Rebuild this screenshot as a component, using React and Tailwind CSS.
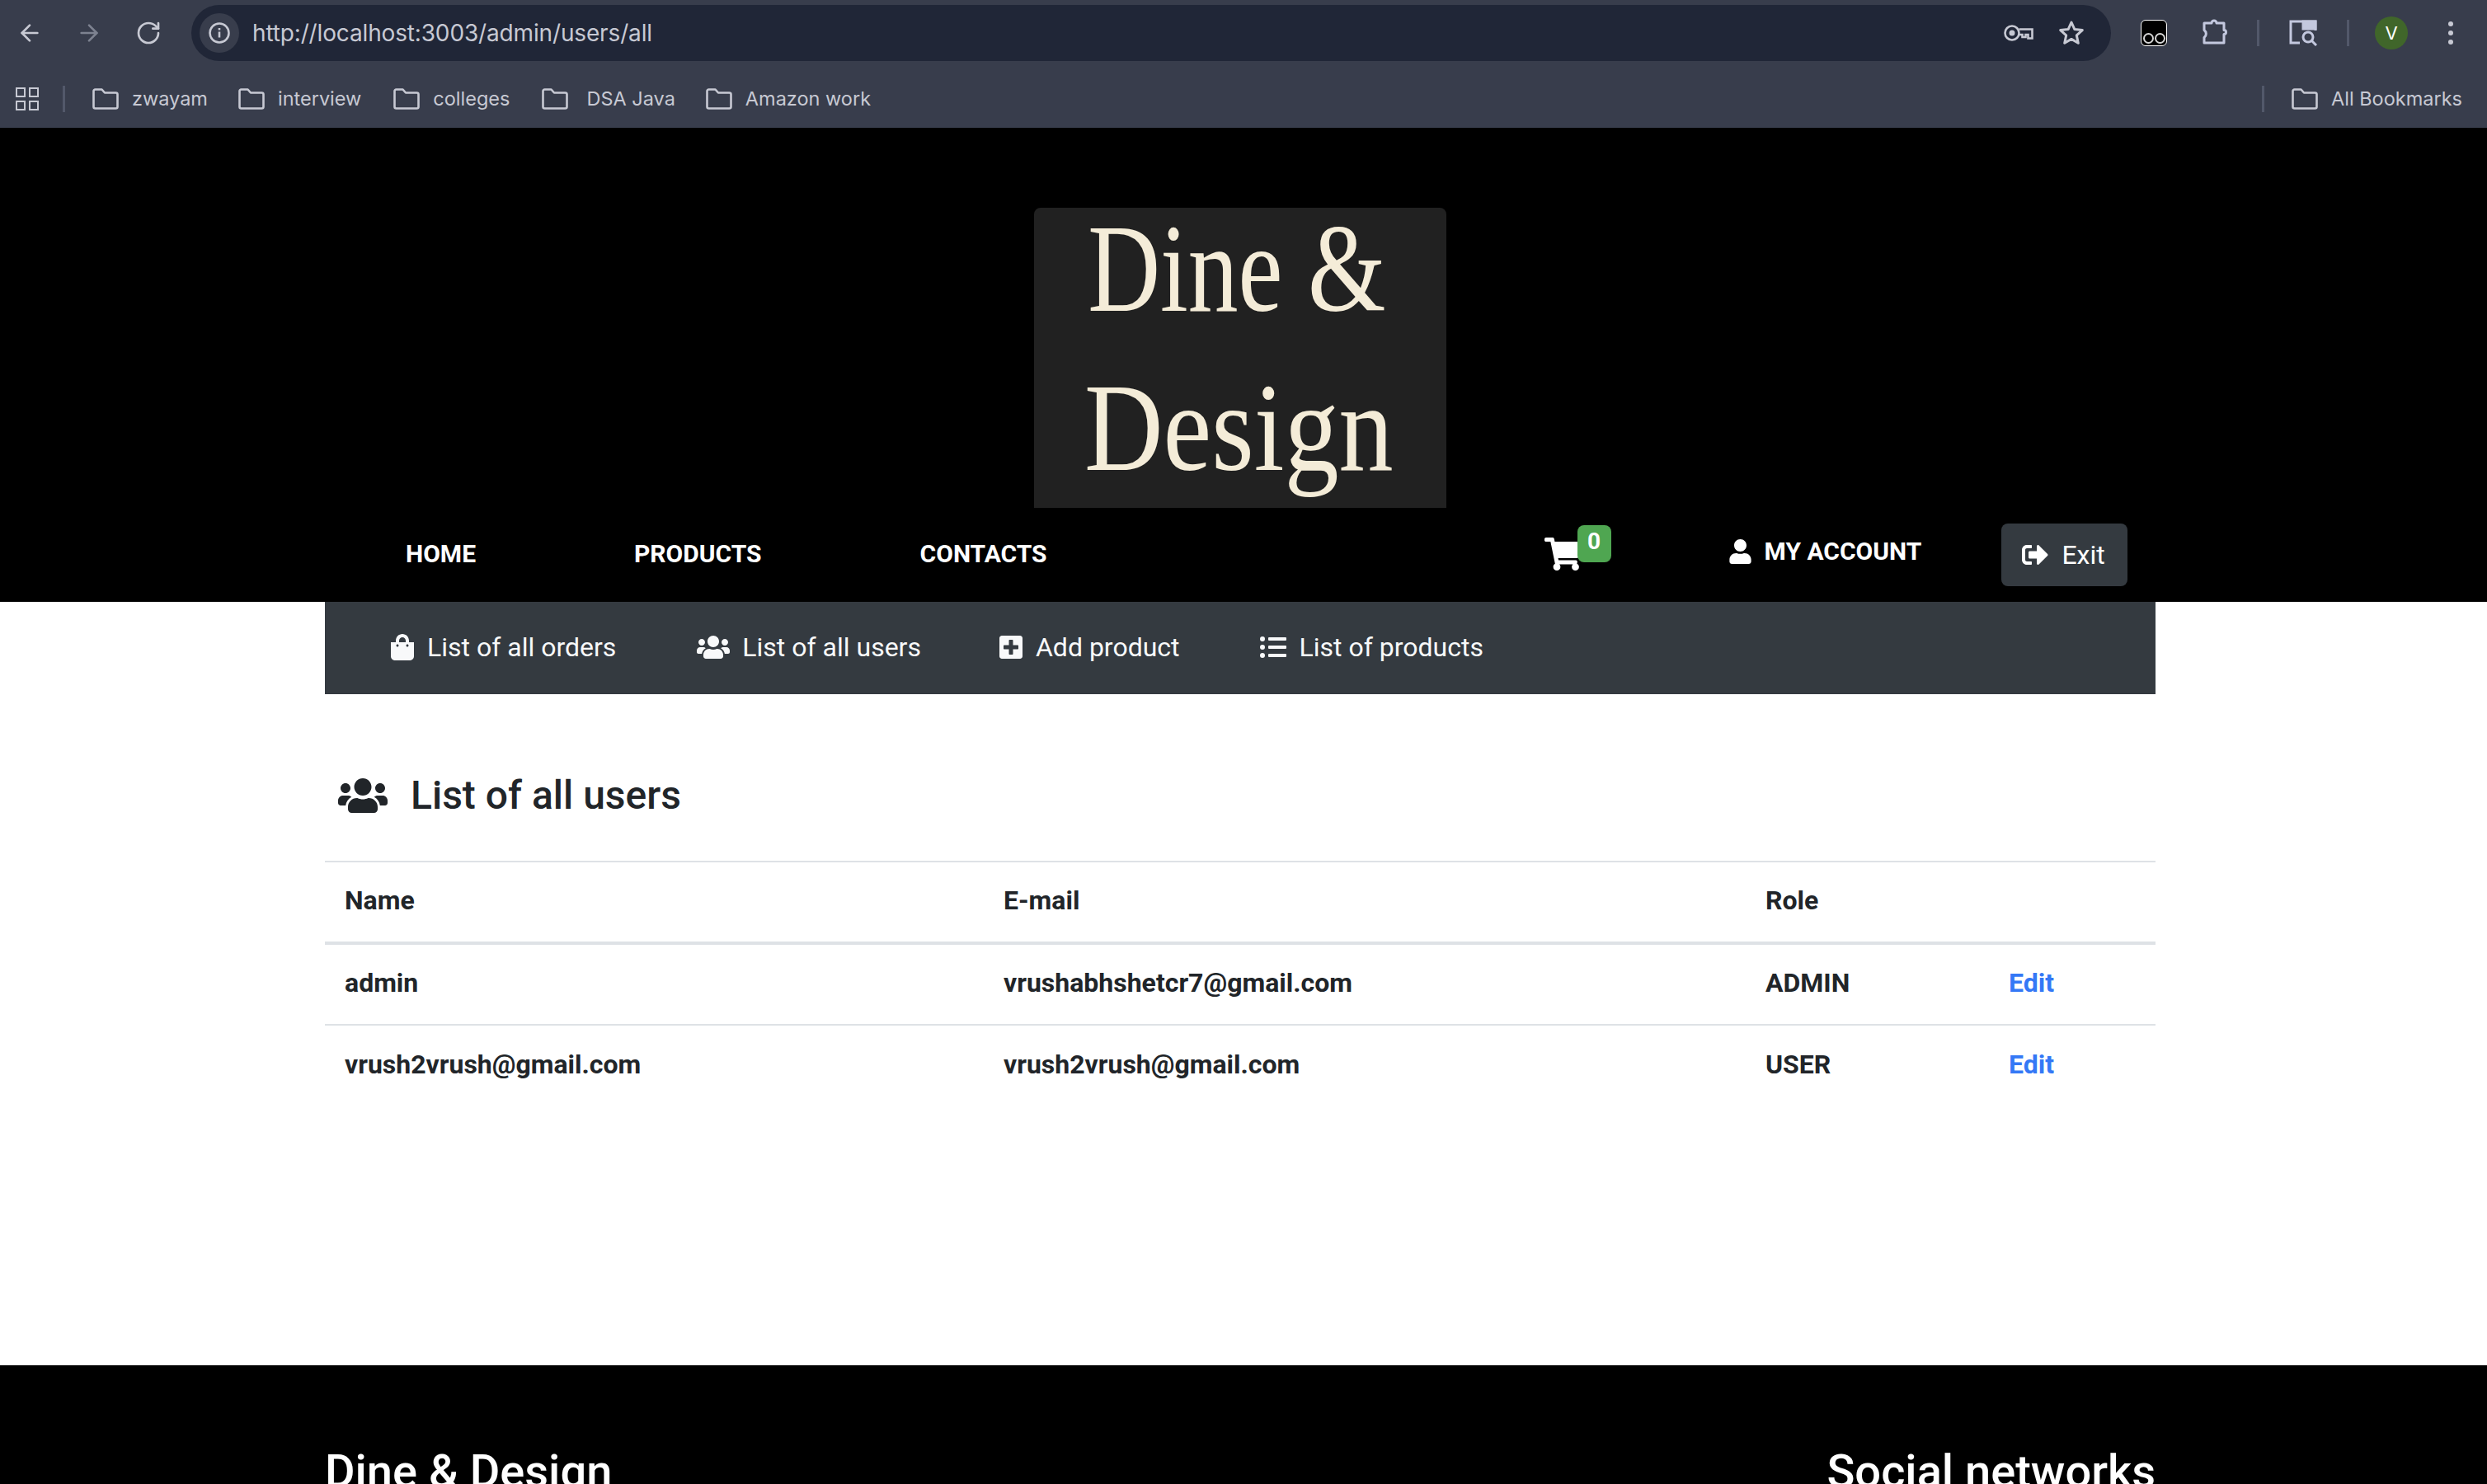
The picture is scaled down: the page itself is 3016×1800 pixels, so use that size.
import { FaShoppingBag, FaUsers, FaPlusSquare, FaListUl, FaShoppingCart, FaUser, FaSignOutAlt } from 'react-icons/fa';
import { ArrowLeft, ArrowRight, RotateCw } from 'lucide-react';

function FolderIcon({ className = '' }) {
  return (
    <svg viewBox="0 0 32 26" fill="none" stroke="currentColor" strokeWidth="2.6" strokeLinejoin="round" className={className}>
      <path d="M1.5 3.500a2 2 0 0 1 2-2h8l3.500 4h13.500a2 2 0 0 1 2 2v15a2 2 0 0 1-2 2h-25a2 2 0 0 1-2-2z" />
    </svg>
  );
}

function Bookmark({ label, className = '', labelClass = '' }) {
  return (
    <div className={`flex items-center gap-4 ${className}`}>
      <FolderIcon className="w-8 h-[26px]" />
      <span className={labelClass}>{label}</span>
    </div>
  );
}

function BrowserChrome() {
  return (
    <div className="bg-[#383d4c] text-[#c7c9d3] font-['Inter',sans-serif] h-[155px]">
      <div className="flex items-center h-20 pl-5">
        <ArrowLeft className="w-8 h-8" strokeWidth={2} />
        <ArrowRight className="w-8 h-8 ml-10 text-[#7d8290]" strokeWidth={2} />
        <RotateCw className="w-8 h-8 ml-10" strokeWidth={2} />
        <div className="flex items-center w-[2328px] h-[68px] ml-9 bg-[#202637] rounded-full pl-2.5">
          <div className="flex items-center justify-center w-12 h-12 rounded-full bg-[#383d4c]">
            <svg viewBox="0 0 28 28" fill="none" stroke="currentColor" strokeWidth="2.6" className="w-7 h-7">
              <circle cx="14" cy="14" r="11.5" />
              <path d="M14 12.500v7M14 8v2.600" />
            </svg>
          </div>
          <span className="ml-4 text-[28px] tracking-[-0.15px]">http://localhost:3003/admin/users/all</span>
          <svg viewBox="0 0 36 20" fill="none" stroke="currentColor" strokeWidth="2.6" className="w-9 h-5 ml-auto">
            <circle cx="10" cy="10" r="8.500" />
            <circle cx="10" cy="10" r="3.500" fill="currentColor" stroke="none" />
            <path d="M18.500 5.500h16v11h-5v-4.500h-3v3h-4v-3h-4" />
          </svg>
          <svg viewBox="0 0 32 32" fill="none" stroke="currentColor" strokeWidth="3" strokeLinejoin="round" className="w-8 h-8 ml-[30px] mr-8">
            <path d="M16 3l3.900 8.600 9.400 1-7 6.300 2 9.300-8.300-4.800-8.300 4.800 2-9.300-7-6.300 9.400-1z" />
          </svg>
        </div>
        <div className="flex items-end justify-center gap-px w-8 h-8 ml-9 pb-0.5 rounded-md bg-black border border-white">
          <span className="w-[13px] h-[13px] rounded-full border-2 border-[#d5d5d5]" />
          <span className="w-[13px] h-[13px] rounded-full border-2 border-[#d5d5d5]" />
        </div>
        <svg viewBox="0 0 32 32" fill="none" stroke="#c3c8de" strokeWidth="3" strokeLinejoin="round" className="w-8 h-8 ml-[42px] -mt-1">
          <path d="M3 6h9a3 3 0 0 1 6 0h9v8.500a2.500 2.500 0 0 1 0 5V30H3v-6.500a5.500 5.500 0 0 0 0-9z" />
        </svg>
        <div className="w-[3px] h-8 ml-[35px] bg-[#52586a]" />
        <svg viewBox="0 0 36 32" fill="none" stroke="#c3c8de" strokeWidth="3" className="w-9 h-8 ml-[35px]">
          <path d="M14 28H3V2h30v11" />
          <path d="M18 2h15v9H18z" fill="#c3c8de" />
          <circle cx="24" cy="21" r="6" />
          <path d="M28.500 25.500l5.500 5.500" />
        </svg>
        <div className="w-[3px] h-8 ml-[35px] bg-[#52586a]" />
        <div className="flex items-center justify-center w-10 h-10 ml-[31px] rounded-full bg-[#40662a] text-white text-[22px]">V</div>
        <div className="flex flex-col gap-[5px] ml-[49px]">
          <span className="w-1.5 h-1.5 rounded-full bg-[#c7c9d3]" />
          <span className="w-1.5 h-1.5 rounded-full bg-[#c7c9d3]" />
          <span className="w-1.5 h-1.5 rounded-full bg-[#c7c9d3]" />
        </div>
      </div>
      <div className="flex items-center h-[75px] pl-[19px] pt-1 text-[23.5px] leading-none">
        <div className="grid grid-cols-2 gap-1 w-7 h-7">
          <span className="border-[2.5px] border-current" />
          <span className="border-[2.5px] border-current" />
          <span className="border-[2.5px] border-current" />
          <span className="border-[2.5px] border-current" />
        </div>
        <div className="w-[3px] h-8 ml-[29px] bg-[#52586a]" />
        <Bookmark label="zwayam" className="ml-[33px]" />
        <Bookmark label="interview" className="ml-[37px]" />
        <Bookmark label="colleges" className="ml-[39px]" />
        <Bookmark label="DSA Java" className="ml-[39px]" labelClass="ml-1.5" />
        <Bookmark label="Amazon work" className="ml-[37px]" />
        <div className="w-[3px] h-8 ml-auto bg-[#52586a]" />
        <Bookmark label="All Bookmarks" className="ml-[33px] mr-[30px]" />
      </div>
    </div>
  );
}

function Logo() {
  return (
    <div className="flex flex-col items-center w-[500px] h-[364px] mx-auto bg-[#212121] rounded-t-lg text-[#f4ecd8] font-['Liberation_Serif',serif] text-[152px] leading-[193px] whitespace-nowrap">
      <div className="scale-x-[0.8] -translate-x-1 -mt-[22px]">Dine &amp;</div>
      <div className="scale-x-[0.87] -translate-x-0.5">Design</div>
    </div>
  );
}

function Header() {
  return (
    <header className="bg-black pt-[97px] pr-2 text-white">
      <Logo />
      <nav className="flex items-start w-[2220px] h-[114px] mx-auto pl-[98px] text-[30px] font-bold">
        <a className="mr-[192px] mt-[33px]">HOME</a>
        <a className="mr-[192px] mt-[33px]">PRODUCTS</a>
        <a className="mt-[33px]">CONTACTS</a>
        <div className="relative ml-[602px] mt-[36px]">
          <FaShoppingCart className="w-[47px] h-[40px]" />
          <span className="absolute -top-[15px] left-[41px] flex items-start justify-center w-[41px] h-[45px] rounded-lg bg-[#4fa651] text-[28px] leading-10">0</span>
        </div>
        <a className="flex items-center ml-[178px] mt-[30px]">
          <FaUser className="w-[27px] h-[30px] mr-4" />
          MY ACCOUNT
        </a>
        <button className="flex items-center w-[153px] h-[76px] ml-[97px] mt-[19px] pl-[25px] rounded-lg bg-[#343a40] text-[32px] font-normal">
          <FaSignOutAlt className="w-8 h-8 mr-4" />
          Exit
        </button>
      </nav>
    </header>
  );
}

function SubNavItem({ icon: Icon, label, iconClass, className = '' }) {
  return (
    <a className={`flex items-center ${className}`}>
      <Icon className={iconClass} />
      {label}
    </a>
  );
}

function SubNav() {
  return (
    <div className="flex items-center w-[2220px] h-28 mx-auto pl-20 pb-0.5 bg-[#343a40] text-[#f8f9fa] text-[32px]">
      <SubNavItem icon={FaShoppingBag} label="List of all orders" iconClass="w-7 h-8 mr-4" />
      <SubNavItem icon={FaUsers} label="List of all users" iconClass="w-10 h-8 mr-[15px]" className="ml-[98px]" />
      <SubNavItem icon={FaPlusSquare} label="Add product" iconClass="w-7 h-8 mr-4" className="ml-[95px]" />
      <SubNavItem icon={FaListUl} label="List of products" iconClass="w-8 h-8 mr-4" className="ml-[97px]" />
    </div>
  );
}

const users = [
  { name: 'admin', email: 'vrushabhshetcr7@gmail.com', role: 'ADMIN' },
  { name: 'vrush2vrush@gmail.com', email: 'vrush2vrush@gmail.com', role: 'USER' },
];

function UsersTable() {
  return (
    <table className="w-full table-fixed border-collapse border-t-2 border-[#dee2e6] text-[32px] font-bold text-left text-[#212529]">
      <thead>
        <tr className="h-[99px] border-b-4 border-[#dee2e6]">
          <th className="w-[799px] pl-6 pb-1">Name</th>
          <th className="w-[924px] pl-6 pb-1">E-mail</th>
          <th className="w-[295px] pl-6 pb-1">Role</th>
          <th />
        </tr>
      </thead>
      <tbody>
        {users.map((u, i) => (
          <tr key={u.name} className={`h-[99px] ${i === 0 ? 'border-b-2 border-[#dee2e6]' : ''}`}>
            <td className="pl-6 pb-1">{u.name}</td>
            <td className="pl-6 pb-1">{u.email}</td>
            <td className="pl-6 pb-1">{u.role}</td>
            <td className="pl-6 pb-1 text-[#3478f6]">Edit</td>
          </tr>
        ))}
      </tbody>
    </table>
  );
}

export default function App() {
  return (
    <div className="h-[1800px] overflow-hidden bg-white font-['Roboto',sans-serif]">
      <BrowserChrome />
      <Header />
      <main className="h-[926px] pr-2">
        <SubNav />
        <div className="w-[2220px] mx-auto">
          <h3 className="flex items-center h-[202px] pt-[44px] pl-4 text-[48px] font-medium text-[#212529]">
            <FaUsers className="w-[60px] h-[48px] mr-[28px]" />
            List of all users
          </h3>
          <UsersTable />
        </div>
      </main>
      <footer className="bg-black h-[144px] pr-2 text-white">
        <div className="flex justify-between w-[2220px] mx-auto pt-[87px] text-[56px] leading-[84px] font-medium">
          <span>Dine &amp; Design</span>
          <span>Social networks</span>
        </div>
      </footer>
    </div>
  );
}
